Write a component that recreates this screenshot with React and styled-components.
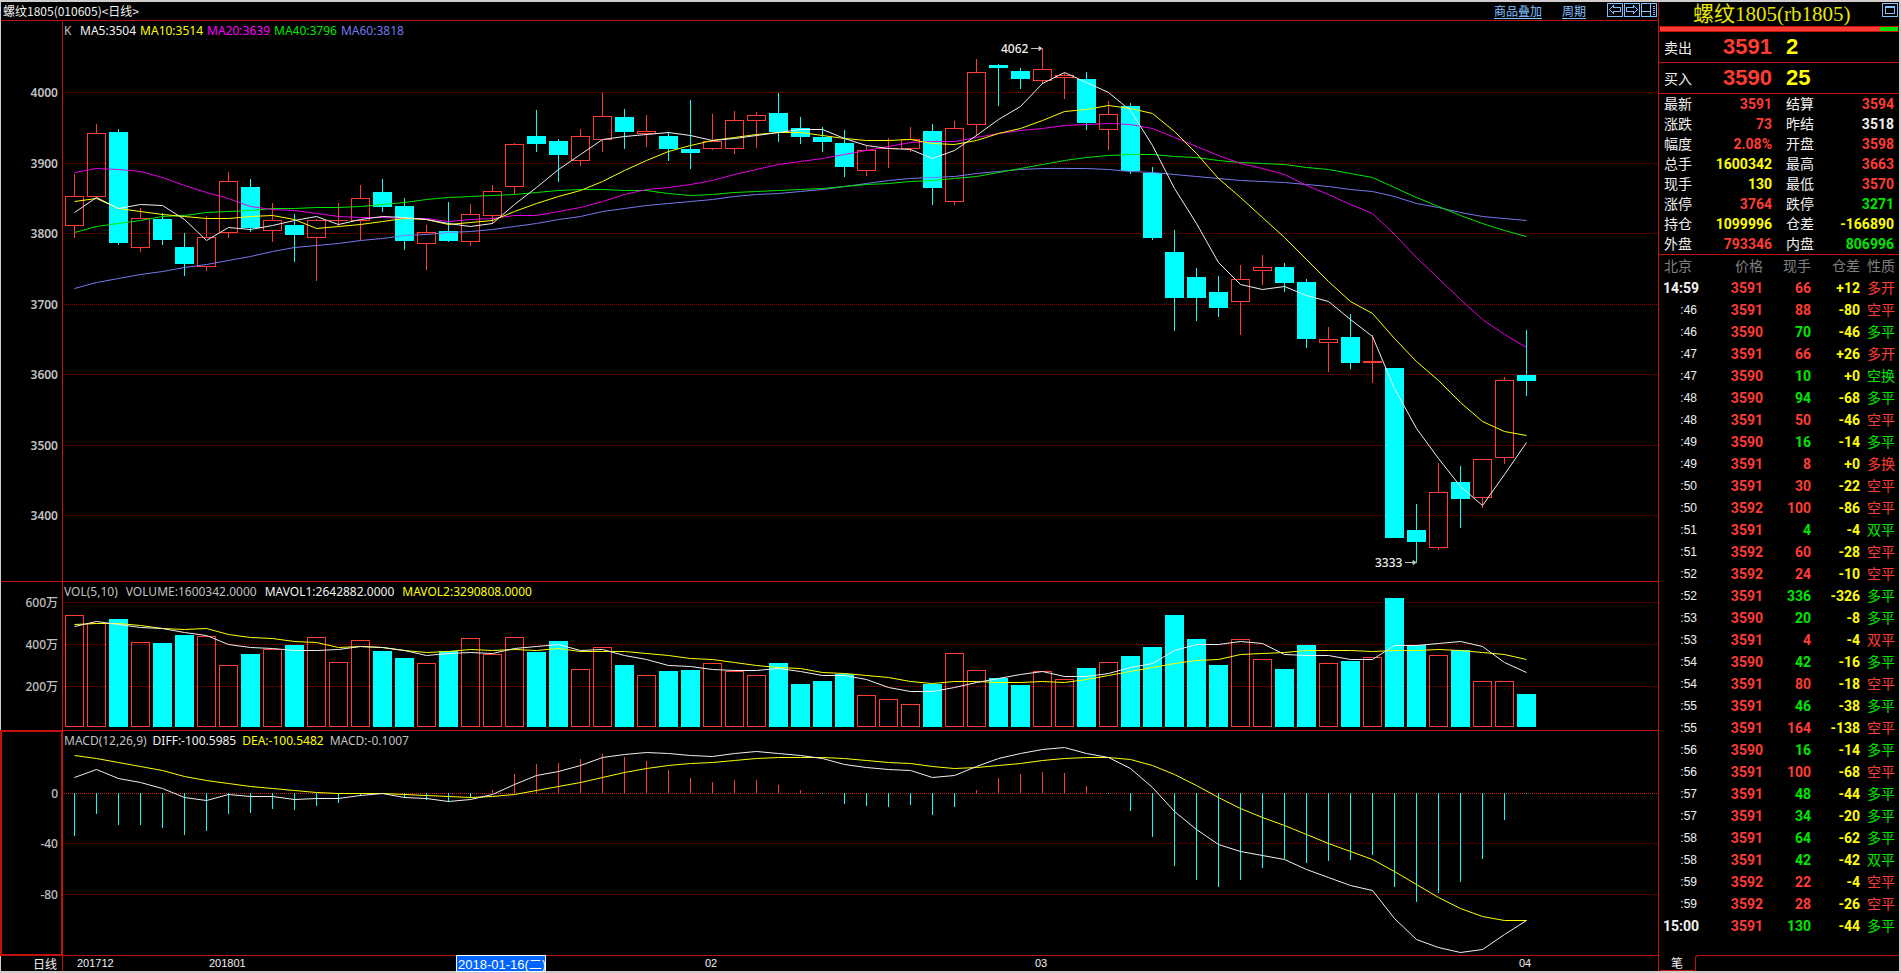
import React from 'react';
import styled, { createGlobalStyle } from 'styled-components';

const C = {
  line: '#c41208',
  grid: '#a00000',
  zero: '#d02020',
  red: '#ff3c34',
  cyan: '#00ffff',
  green: '#00e600',
  yellow: '#ffff00',
  white: '#f0f0f0',
  grey: '#c0c0c0',
  dim: '#808080',
  link: '#80c0ff',
  magenta: '#ff00ff',
  violet: '#7878f0',
};

const SANS = "'Noto Sans', 'Noto Sans CJK SC', sans-serif";
const CJK = "'Noto Sans CJK SC', 'Noto Sans', sans-serif";
const NUM = "Roboto, 'Noto Sans CJK SC', sans-serif";
const ARIAL = "'Liberation Sans', 'Noto Sans CJK SC', sans-serif";

/* ---------- series ---------- */

/* high, body top, body bottom, low, rising (1) or falling (0) */
const candles = [
  [174, 196, 226, 238, 1], [124, 133, 197, 197, 1], [129, 132, 243, 245, 0], [208, 218, 248, 252, 1],
  [213, 219, 240, 245, 0], [233, 247, 264, 276, 0], [216, 237, 267, 271, 1], [172, 181, 233, 238, 1],
  [179, 187, 228, 232, 0], [203, 220, 231, 242, 1], [214, 225, 235, 262, 0], [219, 220, 238, 281, 1],
  [203, 220, 221, 226, 1], [185, 198, 221, 240, 1], [179, 192, 207, 212, 0], [198, 206, 241, 250, 0],
  [225, 232, 244, 270, 1], [202, 231, 241, 242, 0], [204, 214, 242, 246, 1], [185, 191, 216, 224, 1],
  [143, 144, 187, 194, 1], [110, 136, 144, 152, 0], [139, 141, 155, 182, 0], [129, 136, 161, 166, 1],
  [93, 116, 140, 152, 1], [109, 117, 132, 149, 0], [115, 131, 134, 147, 1], [132, 136, 149, 161, 0],
  [100, 149, 153, 169, 0], [114, 141, 149, 150, 1], [111, 120, 149, 154, 1], [112, 115, 121, 148, 1],
  [93, 113, 132, 142, 0], [117, 128, 137, 144, 0], [127, 137, 142, 152, 0], [130, 143, 167, 177, 0],
  [145, 150, 171, 176, 1], [138, 148, 149, 168, 1], [127, 139, 149, 152, 1], [124, 131, 188, 205, 0],
  [121, 128, 202, 205, 1], [59, 72, 125, 136, 1], [64, 65, 68, 106, 0], [68, 71, 79, 89, 0],
  [48, 69, 81, 84, 1], [73, 75, 78, 99, 1], [72, 79, 123, 130, 0], [101, 114, 130, 150, 1],
  [103, 106, 171, 174, 0], [167, 173, 238, 240, 0], [230, 252, 298, 331, 0], [268, 277, 298, 321, 0],
  [276, 292, 308, 317, 0], [265, 279, 302, 335, 1], [255, 267, 271, 285, 1], [263, 267, 283, 292, 0],
  [279, 282, 339, 348, 0], [327, 339, 343, 372, 1], [314, 337, 363, 369, 0], [335, 361, 363, 383, 1],
  [368, 368, 538, 538, 0], [504, 530, 542, 563, 0], [463, 492, 548, 550, 1], [466, 482, 499, 528, 0],
  [459, 459, 498, 508, 1], [377, 380, 458, 464, 1], [330, 375, 381, 396, 0],
];

const ma5 = [212, 197, 208, 204, 205, 219, 240, 227, 229, 225, 220, 216, 224, 219, 216, 217, 219, 223, 226, 223, 204, 187, 169, 154, 139, 136, 134, 132, 135, 140, 138, 135, 132, 129, 129, 138, 145, 148, 149, 158, 150, 135, 119, 106, 83, 72, 82, 92, 110, 145, 188, 223, 262, 284, 289, 286, 295, 301, 319, 336, 388, 428, 458, 486, 505, 474, 442];
const ma10 = [201, 198, 208, 211, 214, 216, 218, 218, 216, 215, 219, 228, 226, 224, 221, 218, 219, 224, 222, 220, 211, 203, 196, 190, 181, 170, 160, 151, 145, 140, 137, 134, 132, 132, 135, 138, 140, 140, 139, 143, 144, 140, 133, 128, 120, 111, 109, 105, 108, 113, 131, 153, 178, 197, 217, 237, 259, 281, 301, 313, 338, 361, 380, 402, 421, 431, 435];
const ma20 = [172, 168, 169, 171, 177, 185, 192, 198, 206, 209, 210, 213, 216, 217, 217, 218, 218, 221, 219, 218, 215, 215, 211, 207, 201, 194, 189, 187, 184, 180, 174, 169, 164, 161, 158, 154, 150, 146, 142, 141, 141, 137, 133, 130, 128, 125, 124, 123, 124, 128, 137, 146, 155, 163, 168, 174, 185, 194, 204, 213, 234, 257, 278, 299, 319, 334, 347];
const ma40 = [232, 226, 223, 220, 216, 215, 212, 211, 210, 208, 208, 207, 207, 206, 204, 202, 199, 197, 196, 195, 194, 192, 190, 189, 189, 190, 190, 193, 195, 194, 192, 191, 190, 189, 188, 186, 184, 183, 181, 180, 178, 176, 172, 168, 164, 160, 157, 155, 154, 154, 156, 157, 160, 162, 163, 164, 167, 169, 173, 177, 187, 197, 206, 215, 223, 230, 236];
const ma60 = [288, 282, 278, 274, 271, 267, 264, 260, 256, 251, 247, 245, 243, 240, 238, 235, 234, 232, 231, 229, 226, 223, 219, 216, 211, 208, 205, 203, 201, 199, 196, 194, 193, 191, 189, 186, 183, 180, 178, 177, 176, 173, 171, 169, 168, 168, 168, 169, 171, 172, 174, 176, 178, 180, 181, 182, 184, 186, 189, 191, 196, 203, 207, 212, 216, 218, 220];

const volumes = [615, 623, 619, 642, 643, 635, 636, 665, 654, 649, 645, 637, 662, 640, 651, 658, 663, 651, 638, 654, 637, 652, 641, 669, 647, 665, 675, 671, 670, 663, 671, 675, 663, 684, 681, 674, 695, 699, 704, 684, 653, 670, 678, 685, 671, 679, 668, 662, 656, 647, 615, 639, 665, 639, 659, 669, 645, 663, 661, 657, 598, 645, 655, 650, 681, 681, 694];
const mavol1 = [626, 621, 624, 627, 628, 632, 635, 644, 647, 648, 650, 650, 649, 646, 647, 650, 655, 653, 652, 653, 648, 646, 644, 650, 649, 655, 659, 665, 666, 669, 670, 670, 668, 671, 675, 675, 679, 687, 691, 691, 687, 682, 678, 674, 671, 676, 676, 673, 667, 663, 650, 644, 644, 641, 643, 654, 655, 655, 659, 659, 645, 645, 643, 641, 646, 662, 672];
const mavol2 = [624, 623, 623, 625, 628, 629, 628, 634, 637, 638, 641, 642, 647, 646, 647, 650, 652, 651, 649, 650, 649, 650, 648, 651, 651, 651, 653, 655, 658, 659, 662, 665, 667, 668, 672, 673, 675, 677, 681, 683, 681, 681, 682, 682, 681, 682, 679, 675, 671, 667, 663, 660, 659, 654, 653, 652, 650, 650, 650, 651, 650, 650, 649, 650, 652, 654, 659];

const macd = [836, 814, 825, 825, 828, 835, 831, 814, 813, 809, 810, 806, 803, 796, 793, 798, 800, 802, 798, 790, 774, 764, 763, 759, 754, 757, 761, 770, 778, 782, 780, 780, 785, 790, 794, 804, 806, 807, 805, 815, 807, 790, 778, 774, 772, 773, 786, 794, 811, 837, 866, 880, 887, 880, 868, 859, 863, 861, 860, 855, 887, 902, 893, 882, 859, 820, 794];
const diff = [777, 769, 778, 782, 788, 797, 800, 794, 796, 796, 799, 798, 798, 795, 793, 797, 798, 801, 799, 794, 784, 775, 771, 765, 757, 754, 752, 753, 755, 756, 753, 751, 753, 755, 758, 764, 767, 769, 770, 777, 775, 766, 758, 753, 749, 747, 753, 757, 768, 787, 811, 829, 844, 851, 855, 859, 869, 877, 885, 890, 918, 939, 947, 952, 949, 934, 920];
const dea = [755, 758, 762, 766, 770, 776, 780, 783, 786, 788, 790, 792, 793, 793, 793, 794, 795, 796, 797, 796, 794, 790, 786, 782, 777, 772, 768, 765, 763, 762, 760, 758, 757, 757, 757, 758, 760, 762, 763, 766, 768, 767, 765, 763, 760, 758, 757, 757, 759, 765, 774, 785, 797, 808, 817, 825, 834, 843, 851, 859, 871, 884, 897, 908, 916, 920, 920];

const centre = (i) => 74 + i * 22;
const ZERO = 793;
const VOL_BASE = 727;

/* ---------- drawing pieces ---------- */

const Grid = ({ y, bright }) => (
  <line x1="1" x2="100%" y1={y + 0.5} y2={y + 0.5} stroke={bright ? C.zero : C.grid} strokeDasharray="1 1" shapeRendering="crispEdges" />
);

const Curve = ({ values, color }) => (
  <polyline
    fill="none"
    stroke={color}
    points={values.map((y, i) => `${centre(i) + 0.5},${y + 0.5}`).join(' ')}
  />
);

const Candle = ({ i, data }) => {
  const [high, top, bottom, low, up] = data;
  const x = centre(i);
  const color = up ? C.red : C.cyan;
  return (
    <g shapeRendering="crispEdges">
      {high < top && <rect x={x} y={high} width="1" height={top - high} fill={color} />}
      {low > bottom && <rect x={x} y={bottom} width="1" height={low - bottom} fill={color} />}
      <Body x={x} top={top} bottom={bottom} up={up} />
    </g>
  );
};

const Body = ({ x, top, bottom, up }) =>
  up && bottom - top > 2 ? (
    <rect x={x - 8.5} y={top + 0.5} width="18" height={bottom - top - 1} fill="none" stroke={C.red} shapeRendering="crispEdges" />
  ) : (
    <rect x={x - 9} y={top} width="19" height={bottom - top} fill={up ? C.red : C.cyan} shapeRendering="crispEdges" />
  );

const Arrow = ({ x, y }) => (
  <path d={`M${x} ${y + 0.5}h10M${x + 8} ${y - 1.5}l3 2l-3 2z`} stroke={C.grey} fill={C.grey} />
);

/* ---------- layout ---------- */

const Global = createGlobalStyle`
  *, *::before, *::after { box-sizing: border-box; }
  body { margin: 0; background: #000; }
`;

const Frame = styled.div`
  display: grid;
  grid-template-columns: minmax(0, 1fr) 241px;
  min-height: 100vh;
  background: #000;
  color: ${C.white};
  border: solid #d0cccc;
  border-width: 2px 2px 2px 1px;
  font: 12px/16px ${SANS};
`;

const Main = styled.main`
  display: flex;
  flex-direction: column;
  min-width: 0;
`;

const TitleBar = styled.header`
  display: flex;
  align-items: center;
  height: 19px;
  padding: 0 1px 1px 2px;
  border-bottom: 1px solid ${C.line};
  font-family: ${CJK};
`;

const Title = styled.h1`
  margin: 0 auto 0 0;
  font-size: 12px;
  font-weight: 400;
`;

const Links = styled.nav`
  display: flex;
  gap: 20px;
  margin-right: 21px;
`;

const ToolLink = styled.a`
  color: ${C.link};
  text-underline-offset: 2px;
`;

const Tools = styled.div`
  display: flex;
  gap: 1px;
`;

const IconButton = styled.button`
  display: block;
  width: 16px;
  height: 15px;
  padding: 0;
  border: 0;
  background: none;
  color: ${C.link};

  svg {
    display: block;
    fill: none;
    stroke: currentColor;
  }
`;

const Panel = styled.section`
  display: grid;
  grid-template-columns: 61px minmax(0, 1fr);
  flex: ${(p) => (p.$grow ? '1 0 auto' : '0 0 auto')};
  border-bottom: ${(p) => (p.$last ? 0 : 1)}px solid ${C.line};
`;

const Scale = styled.svg`
  display: block;
  width: 100%;
  height: 20px;
  overflow: visible;
  font: ${(p) => p.$weight || 400} 12px ${SANS};
  fill: ${C.grey};
  text-anchor: end;
`;

const ScaleCell = styled.div`
  min-width: 0;
  outline: ${(p) => (p.$active ? `2px solid ${C.line}` : 'none')};
  outline-offset: -1px;
`;

const Plot = styled.div`
  min-width: 0;
  border-left: 1px solid ${C.line};
`;

const Legend = styled.div`
  display: flex;
  align-items: center;
  gap: ${(p) => p.$gap}px;
  height: 20px;
  padding-left: 1px;
  white-space: nowrap;
`;

const LegendItem = styled.span`
  color: ${(p) => p.$color};
  min-width: ${(p) => (p.$lead ? 12 : 0)}px;
`;

const Canvas = styled.svg`
  display: block;
  width: 100%;
  height: ${(p) => p.$height}px;
  overflow: visible;
  font: 500 12px ${SANS};
`;

const AxisName = styled.div`
  padding-right: 5px;
  text-align: right;
  line-height: 15px;
  font-family: ${CJK};
`;

/* ---------- quote panel ---------- */

const Quote = styled.aside`
  display: flex;
  flex-direction: column;
  border-left: 1px solid ${C.line};
  font: 400 14px/20px ${CJK};
`;

const QuoteHead = styled.div`
  display: grid;
  grid-template-columns: 34px 1fr 17px;
  height: 24px;
`;

const QuoteName = styled.h2`
  margin: 0;
  color: #e6e600;
  font: 400 21px/24px 'Liberation Serif', 'Noto Sans CJK SC', serif;
  white-space: nowrap;
`;

const Balance = styled.div`
  display: flex;
  height: 6px;
  padding: 0 1px;
  border: solid ${C.line};
  border-width: 1px 0;
`;

const Share = styled.div`
  flex: ${(p) => p.$share};
  background: ${(p) => p.$color};
`;

const OrderRow = styled.div`
  display: grid;
  grid-template-columns: 28px 80px 1fr;
  align-items: center;
  height: 31px;
  padding: 0 5px;
  border-bottom: 1px solid ${C.line};
`;

const OrderPrice = styled.span`
  color: ${C.red};
  font: 700 22px/30px ${ARIAL};
  text-align: right;
`;

const OrderSize = styled(OrderPrice)`
  color: ${C.yellow};
  text-align: left;
  padding-left: 14px;
`;

const Stats = styled.dl`
  display: grid;
  grid-template-columns: 108px 108px;
  column-gap: 14px;
  margin: 0;
  padding: 0 5px;
  border-bottom: 1px solid ${C.line};
`;

const Stat = styled.div`
  display: flex;
  justify-content: space-between;
  height: 20px;

  dt {
    line-height: 18px;
  }

  dd {
    margin: 0;
    color: ${(p) => p.$color};
    font: 700 14px/20px ${NUM};
  }
`;

const Ticks = styled.table`
  width: 100%;
  table-layout: fixed;
  border-collapse: collapse;
`;

const Th = styled.th`
  width: ${(p) => p.$w}px;
  height: 22px;
  padding: 0 4px 0 ${(p) => (p.$left ? 5 : 0)}px;
  color: ${C.dim};
  font-weight: 400;
  line-height: 20px;
  text-align: ${(p) => (p.$left ? 'left' : 'right')};
  vertical-align: top;
`;

const Td = styled.td`
  height: 22px;
  padding: 0 4px 0 0;
  color: ${(p) => p.$color || C.white};
  font: 700 14px/20px ${NUM};
  text-align: right;
`;

const Time = styled(Td)`
  padding-right: ${(p) => (p.$full ? 4 : 6)}px;
  font: ${(p) => (p.$full ? `700 14px/20px ${NUM}` : `400 12px/20px ${ARIAL}`)};
`;

const Kind = styled(Td)`
  font: 400 14px/20px ${CJK};
  vertical-align: top;
`;

const Tabs = styled.div`
  display: flex;
  height: 16px;
  margin-top: auto;
`;

const Tab = styled.button`
  width: 36px;
  padding: 0;
  border: solid ${C.line};
  border-width: 0 0 1px;
  border-radius: 0 0 3px 3px;
  background: none;
  color: ${C.white};
  font: 12px/14px ${CJK};
`;

const TabRest = styled.div`
  flex: 1;
  border: solid ${C.line};
  border-width: 1px 0 0 1px;
  border-top-left-radius: 3px;
`;

/* ---------- data for the quote panel ---------- */

const stats = [
  ['最新', '3591', 'red'], ['结算', '3594', 'red'],
  ['涨跌', '73', 'red'], ['昨结', '3518', 'white'],
  ['幅度', '2.08%', 'red'], ['开盘', '3598', 'red'],
  ['总手', '1600342', 'yellow'], ['最高', '3663', 'red'],
  ['现手', '130', 'yellow'], ['最低', '3570', 'red'],
  ['涨停', '3764', 'red'], ['跌停', '3271', 'green'],
  ['持仓', '1099996', 'yellow'], ['仓差', '-166890', 'yellow'],
  ['外盘', '793346', 'red'], ['内盘', '806996', 'green'],
];

/* time, price, lots, open interest change, kind, side */
const ticks = [
  ['14:59', 3591, 66, '+12', '多开', 'red'],
  [':46', 3591, 88, '-80', '空平', 'red'],
  [':46', 3590, 70, '-46', '多平', 'green'],
  [':47', 3591, 66, '+26', '多开', 'red'],
  [':47', 3590, 10, '+0', '空换', 'green'],
  [':48', 3590, 94, '-68', '多平', 'green'],
  [':48', 3591, 50, '-46', '空平', 'red'],
  [':49', 3590, 16, '-14', '多平', 'green'],
  [':49', 3591, 8, '+0', '多换', 'red'],
  [':50', 3591, 30, '-22', '空平', 'red'],
  [':50', 3592, 100, '-86', '空平', 'red'],
  [':51', 3591, 4, '-4', '双平', 'green'],
  [':51', 3592, 60, '-28', '空平', 'red'],
  [':52', 3592, 24, '-10', '空平', 'red'],
  [':52', 3591, 336, '-326', '多平', 'green'],
  [':53', 3590, 20, '-8', '多平', 'green'],
  [':53', 3591, 4, '-4', '双平', 'red'],
  [':54', 3590, 42, '-16', '多平', 'green'],
  [':54', 3591, 80, '-18', '空平', 'red'],
  [':55', 3591, 46, '-38', '多平', 'green'],
  [':55', 3591, 164, '-138', '空平', 'red'],
  [':56', 3590, 16, '-14', '多平', 'green'],
  [':56', 3591, 100, '-68', '空平', 'red'],
  [':57', 3591, 48, '-44', '多平', 'green'],
  [':57', 3591, 34, '-20', '多平', 'green'],
  [':58', 3591, 64, '-62', '多平', 'green'],
  [':58', 3591, 42, '-42', '双平', 'green'],
  [':59', 3592, 22, '-4', '空平', 'red'],
  [':59', 3592, 28, '-26', '空平', 'red'],
  ['15:00', 3591, 130, '-44', '多平', 'green'],
];

const priceLevels = [[4000, 92], [3900, 163], [3800, 233], [3700, 304], [3600, 374], [3500, 445], [3400, 515]];
const volumeLevels = [['600万', 602], ['400万', 644], ['200万', 686]];
const macdLevels = [['0', 793], ['-40', 843], ['-80', 894]];
const months = [['201712', 77], ['201801', 209], ['02', 705], ['03', 1035], ['04', 1519]];

const Labels = ({ levels, top, weight }) => (
  <Scale $weight={weight}>
    {levels.map(([label, y]) => (
      <text key={label} x="57" y={y - top + 5}>{label}</text>
    ))}
  </Scale>
);

const Header = () => (
  <TitleBar>
    <Title>螺纹1805(010605)&lt;日线&gt;</Title>
    <Links>
      <ToolLink href="#overlay">商品叠加</ToolLink>
      <ToolLink href="#period">周期</ToolLink>
    </Links>
    <Tools>
      <IconButton aria-label="向左">
        <svg width="16" height="15" shapeRendering="crispEdges">
          <path d="M.5 .5h15v13h-15z" />
          <path d="M2.5 6.5l4-4v2h7v4h-7v2z" />
        </svg>
      </IconButton>
      <IconButton aria-label="向右">
        <svg width="16" height="15" shapeRendering="crispEdges">
          <path d="M.5 .5h15v13h-15z" />
          <path d="M13.5 6.5l-4-4v2h-7v4h7v2z" />
        </svg>
      </IconButton>
      <IconButton aria-label="分栏">
        <svg width="16" height="15" shapeRendering="crispEdges">
          <path d="M.5 .5h15v13h-15zM.5 8.5h9M9.5 .5v13M12 3.5h2M12 5.5h2M12 7.5h2M12 9.5h2M12 11.5h2" />
        </svg>
      </IconButton>
    </Tools>
  </TitleBar>
);

const PricePanel = () => (
  <Panel $grow>
    <ScaleCell><Labels levels={priceLevels} top={21} weight={600} /></ScaleCell>
    <Plot>
      <Legend $gap={4}>
        <LegendItem $color={C.grey} $lead>K</LegendItem>
        <LegendItem $color={C.white}>MA5:3504</LegendItem>
        <LegendItem $color={C.yellow}>MA10:3514</LegendItem>
        <LegendItem $color={C.magenta}>MA20:3639</LegendItem>
        <LegendItem $color={C.green}>MA40:3796</LegendItem>
        <LegendItem $color={C.violet}>MA60:3818</LegendItem>
      </Legend>
      <Canvas $height={540}>
        {priceLevels.map(([label, y]) => <Grid key={label} y={y - 41} />)}
        <g transform="translate(-63 -41)">
          {candles.map((c, i) => <Candle key={i} i={i} data={c} />)}
          <Curve values={ma60} color={C.violet} />
          <Curve values={ma40} color={C.green} />
          <Curve values={ma20} color="#e600e6" />
          <Curve values={ma10} color={C.yellow} />
          <Curve values={ma5} color={C.white} />
          <text x="1001" y="53" fill={C.white}>4062</text>
          <Arrow x={1031} y={48} />
          <text x="1375" y="567" fill={C.white}>3333</text>
          <Arrow x={1405} y={562} />
        </g>
      </Canvas>
    </Plot>
  </Panel>
);

const VolumePanel = () => (
  <Panel>
    <ScaleCell><Labels levels={volumeLevels} top={582} weight={500} /></ScaleCell>
    <Plot>
      <Legend $gap={8}>
        <LegendItem $color={C.grey}>VOL(5,10)</LegendItem>
        <LegendItem $color={C.grey}>VOLUME:1600342.0000</LegendItem>
        <LegendItem $color={C.white}>MAVOL1:2642882.0000</LegendItem>
        <LegendItem $color={C.yellow}>MAVOL2:3290808.0000</LegendItem>
      </Legend>
      <Canvas $height={128}>
        {volumeLevels.map(([label, y]) => <Grid key={label} y={y - 602} />)}
        <g transform="translate(-63 -602)">
          {volumes.map((top, i) => <Body key={i} x={centre(i)} top={top} bottom={VOL_BASE} up={candles[i][4]} />)}
          <Curve values={mavol2} color={C.yellow} />
          <Curve values={mavol1} color={C.white} />
        </g>
      </Canvas>
    </Plot>
  </Panel>
);

const MacdPanel = () => (
  <Panel>
    <ScaleCell $active><Labels levels={macdLevels} top={731} weight={500} /></ScaleCell>
    <Plot>
      <Legend $gap={6}>
        <LegendItem $color={C.grey}>MACD(12,26,9)</LegendItem>
        <LegendItem $color={C.white}>DIFF:-100.5985</LegendItem>
        <LegendItem $color={C.yellow}>DEA:-100.5482</LegendItem>
        <LegendItem $color={C.grey}>MACD:-0.1007</LegendItem>
      </Legend>
      <Canvas $height={204}>
        {macdLevels.map(([label, y]) => <Grid key={label} y={y - 751} bright={y === ZERO} />)}
        <g transform="translate(-63 -751)">
          {macd.map((y, i) => (
            <rect
              key={i}
              x={centre(i)}
              y={Math.min(y, ZERO)}
              width="1"
              height={Math.abs(y - ZERO)}
              fill={y < ZERO ? C.red : C.cyan}
            />
          ))}
          <Curve values={dea} color={C.yellow} />
          <Curve values={diff} color={C.white} />
        </g>
      </Canvas>
    </Plot>
  </Panel>
);

const DateAxis = () => (
  <Panel $last>
    <AxisName>日线</AxisName>
    <Plot>
      <Canvas $height={15}>
        <g transform="translate(-63 0)" fontFamily="Liberation Sans" fontWeight="400">
          {months.map(([label, x]) => (
            <text key={label} x={x} y="11" fontSize="11" fill={C.white}>{label}</text>
          ))}
          <rect x="456.5" y="-.5" width="89" height="16" fill="#0064ff" stroke="#fff" />
          <text x="458" y="13" fontSize="13" fontFamily={ARIAL} fill="#fff">2018-01-16(二)</text>
        </g>
      </Canvas>
    </Plot>
  </Panel>
);

const QuotePanel = () => (
  <Quote>
    <QuoteHead>
      <span />
      <QuoteName>螺纹1805(rb1805)</QuoteName>
      <IconButton aria-label="窗口">
        <svg width="16" height="15" shapeRendering="crispEdges">
          <path d="M.5 1.5h15v13h-15zM3.5 4.5h9v7h-9zM3.5 5.5h9" />
        </svg>
      </IconButton>
    </QuoteHead>
    <Balance>
      <Share $share={220} $color={C.red} />
      <Share $share={18} $color={C.green} />
    </Balance>
    <OrderRow>
      卖出<OrderPrice>3591</OrderPrice><OrderSize>2</OrderSize>
    </OrderRow>
    <OrderRow>
      买入<OrderPrice>3590</OrderPrice><OrderSize>25</OrderSize>
    </OrderRow>
    <Stats>
      {stats.map(([name, value, color]) => (
        <Stat key={name} $color={C[color]}>
          <dt>{name}</dt>
          <dd>{value}</dd>
        </Stat>
      ))}
    </Stats>
    <Ticks>
      <thead>
        <tr>
          <Th $w={44} $left>北京</Th>
          <Th $w={64}>价格</Th>
          <Th $w={48}>现手</Th>
          <Th $w={49}>仓差</Th>
          <Th>性质</Th>
        </tr>
      </thead>
      <tbody>
        {ticks.map(([time, price, lots, change, kind, side], i) => (
          <tr key={i}>
            <Time $full={time.length > 3}>{time}</Time>
            <Td $color={C.red}>{price}</Td>
            <Td $color={C[side]}>{lots}</Td>
            <Td $color={C.yellow}>{change}</Td>
            <Kind $color={C[side]}>{kind}</Kind>
          </tr>
        ))}
      </tbody>
    </Ticks>
    <Tabs>
      <Tab>笔</Tab>
      <TabRest />
    </Tabs>
  </Quote>
);

export default function App() {
  return (
    <>
      <Global />
      <Frame>
        <Main>
          <Header />
          <PricePanel />
          <VolumePanel />
          <MacdPanel />
          <DateAxis />
        </Main>
        <QuotePanel />
      </Frame>
    </>
  );
}
